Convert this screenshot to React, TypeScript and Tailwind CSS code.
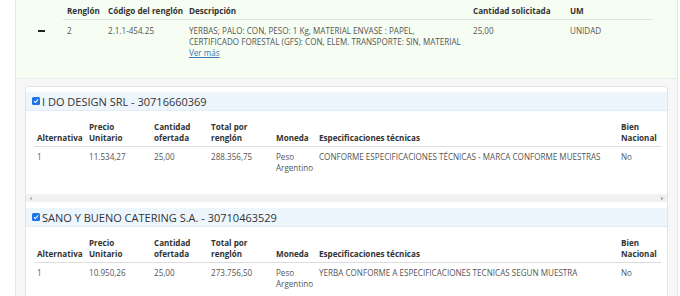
import React from 'react'

const font = { fontFamily: '"Open Sans", "Liberation Sans", sans-serif' }

type Offer = {
  name: string
  precio: string
  total: string
  spec: string
}

const offers: Offer[] = [
  {
    name: 'I DO DESIGN SRL - 30716660369',
    precio: '11.534,27',
    total: '288.356,75',
    spec: 'CONFORME ESPECIFICACIONES TÉCNICAS - MARCA CONFORME MUESTRAS',
  },
  {
    name: 'SANO Y BUENO CATERING S.A. - 30710463529',
    precio: '10.950,26',
    total: '273.756,50',
    spec: 'YERBA CONFORME A ESPECIFICACIONES TECNICAS SEGUN MUESTRA',
  },
]

function Check() {
  return (
    <span className="w-[8px] h-[8px] rounded-[1.5px] bg-[#1a73e8] flex items-center justify-center shrink-0">
      <svg width="6" height="6" viewBox="0 0 10 10">
        <path d="M1.5 5.2 L4 7.6 L8.6 2.4" stroke="white" strokeWidth="1.8" fill="none" />
      </svg>
    </span>
  )
}

function ScrollBar() {
  return (
    <div className="h-[8px] bg-[#f1f1f1] flex items-center justify-between px-[3px]">
      <svg width="4" height="5" viewBox="0 0 4 5">
        <path d="M3 0.5 L0.5 2.5 L3 4.5 Z" fill="#b5b5b5" />
      </svg>
      <svg width="4" height="5" viewBox="0 0 4 5">
        <path d="M1 0.5 L3.5 2.5 L1 4.5 Z" fill="#a0a0a0" />
      </svg>
    </div>
  )
}

function OfferBlock({ o, first }: { o: Offer; first: boolean }) {
  return (
    <div className={first ? '' : 'mt-[6px]'}>
      <div className="h-[19px] bg-[#eef6fd] border-b border-[#e3ecf5] flex items-center gap-[2px] pl-[6px]">
        <Check />
        <span className="text-[11px] text-[#333] leading-none">{o.name}</span>
      </div>
      <div className="pl-[8px] pr-[7px] pt-[10px] pb-[21px]">
        <table className="w-[627px] table-fixed border-collapse text-[8.1px] leading-[11px]">
          <colgroup>
            <col className="w-[52px]" />
            <col className="w-[65px]" />
            <col className="w-[57px]" />
            <col className="w-[65px]" />
            <col className="w-[43px]" />
            <col className="w-[302px]" />
            <col className="w-[43px]" />
          </colgroup>
          <thead>
            <tr className="text-[#333] font-bold align-bottom">
              <th className="text-left font-bold px-[3px] pb-[3px]">Alternativa</th>
              <th className="text-left font-bold px-[3px] pb-[3px]">Precio<br />Unitario</th>
              <th className="text-left font-bold px-[3px] pb-[3px]">Cantidad<br />ofertada</th>
              <th className="text-left font-bold px-[3px] pb-[3px]">Total por<br />renglón</th>
              <th className="text-left font-bold px-[3px] pb-[3px]">Moneda</th>
              <th className="text-left font-bold px-[3px] pb-[3px]">Especificaciones técnicas</th>
              <th className="text-left font-bold px-[3px] pb-[3px]">Bien<br />Nacional</th>
            </tr>
          </thead>
          <tbody>
            <tr className="text-[#555] align-top border-t border-[#dddddd]">
              <td className="px-[3px] pt-[4px]">1</td>
              <td className="px-[3px] pt-[4px]">{o.precio}</td>
              <td className="px-[3px] pt-[4px]">25,00</td>
              <td className="px-[3px] pt-[4px]">{o.total}</td>
              <td className="px-[3px] pt-[4px]">Peso<br />Argentino</td>
              <td className="px-[3px] pt-[4px] whitespace-nowrap">{o.spec}</td>
              <td className="px-[3px] pt-[4px]">No</td>
            </tr>
          </tbody>
        </table>
      </div>
      <ScrollBar />
    </div>
  )
}

export default function App() {
  return (
    <div className="w-[680px] h-[296px] overflow-hidden bg-white" style={font}>
      <div className="ml-[15px] w-[663px] h-full border-x border-[#e6e6e6] bg-[#f7f7f7]">
        {/* Requested item */}
        <div className="h-[79px] bg-[#f6fdf3] border-b border-[#e8ece6] flex">
          <div className="w-[47px] flex justify-center pl-[3px] pt-[30px]">
            <span className="w-[7px] h-[2px] bg-[#222]" />
          </div>
          <table className="w-[590px] h-fit table-fixed border-collapse text-[8.1px] leading-[11px] mt-[5px]">
            <colgroup>
              <col className="w-[41px]" />
              <col className="w-[81px]" />
              <col className="w-[284px]" />
              <col className="w-[97px]" />
              <col className="w-[87px]" />
            </colgroup>
            <thead>
              <tr className="text-[#333] whitespace-nowrap">
                <th className="text-left font-bold px-[4px] pb-[3px]">Renglón</th>
                <th className="text-left font-bold px-[4px] pb-[3px]">Código del renglón</th>
                <th className="text-left font-bold px-[4px] pb-[3px]">Descripción</th>
                <th className="text-left font-bold px-[4px] pb-[3px]">Cantidad solicitada</th>
                <th className="text-left font-bold px-[4px] pb-[3px]">UM</th>
              </tr>
            </thead>
            <tbody>
              <tr className="text-[#555] align-top border-t border-[#dfe5dc]">
                <td className="px-[4px] pt-[5px]">2</td>
                <td className="px-[4px] pt-[5px]">2.1.1-454.25</td>
                <td className="px-[4px] pt-[5px] whitespace-nowrap">
                  YERBAS; PALO: CON, PESO: 1 Kg, MATERIAL ENVASE : PAPEL,
                  <br />
                  CERTIFICADO FORESTAL (GFS): CON, ELEM. TRANSPORTE: SIN, MATERIAL
                  <br />
                  <a className="text-[#337ab7] underline">Ver más</a>
                </td>
                <td className="px-[4px] pt-[5px]">25,00</td>
                <td className="px-[4px] pt-[5px]">UNIDAD</td>
              </tr>
            </tbody>
          </table>
        </div>

        {/* Offers */}
        <div className="ml-[9px] mr-[9px] mt-[7px] bg-white border border-[#e4e4e4] rounded-[3px] pt-[5px]">
          {offers.map((o, i) => (
            <OfferBlock key={o.name} o={o} first={i === 0} />
          ))}
        </div>
      </div>
    </div>
  )
}
